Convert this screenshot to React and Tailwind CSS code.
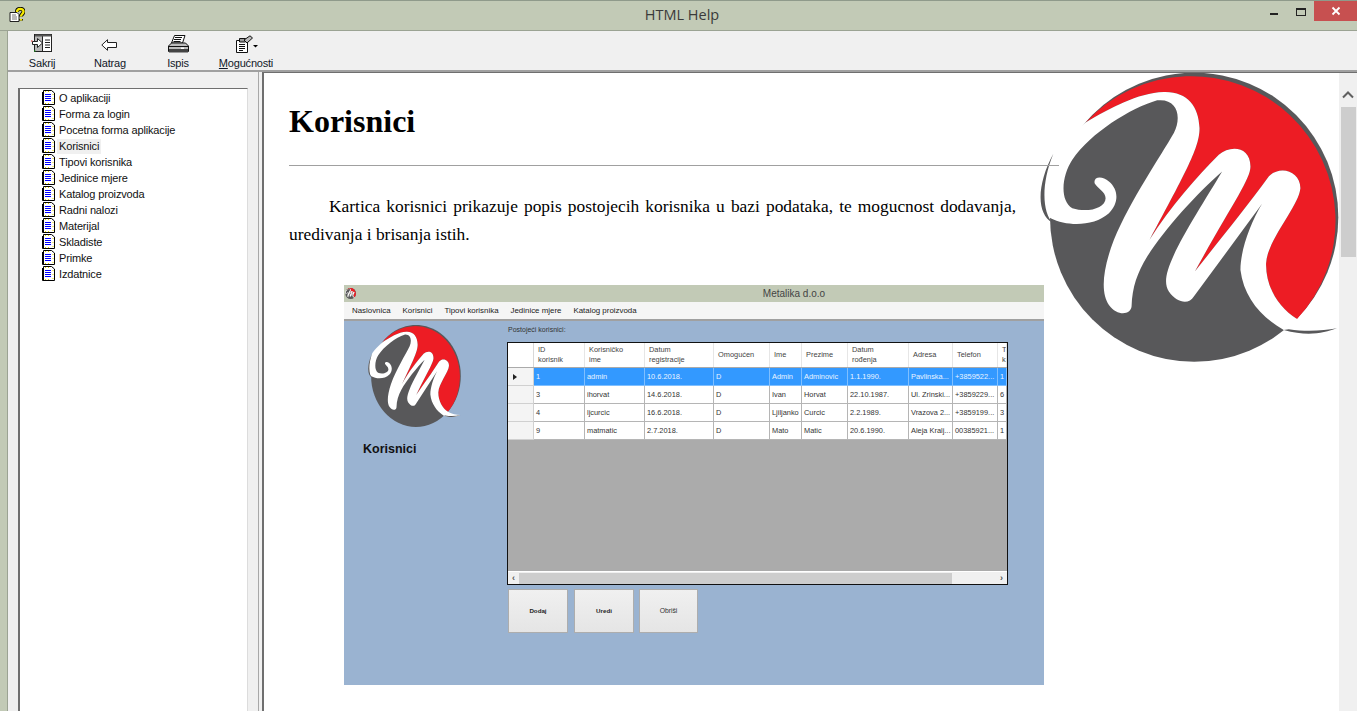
const topics = ['O aplikaciji', 'Forma za login', 'Pocetna forma aplikacije', 'Korisnici', 'Tipovi korisnika', 'Jedinice mjere', 'Katalog proizvoda', 'Radni nalozi', 'Materijal', 'Skladiste', 'Primke', 'Izdatnice'];

const menu = ['Naslovnica', 'Korisnici', 'Tipovi korisnika', 'Jedinice mjere', 'Katalog proizvoda'];

const headers = [['ID', 'korisnik'], ['Korisničko', 'ime'], ['Datum', 'registracije'], ['Omogućen'], ['Ime'], ['Prezime'], ['Datum', 'rođenja'], ['Adresa'], ['Telefon'], ['T', 'k']];

const rows = [
  ['1', 'admin', '10.6.2018.', 'D', 'Admin', 'Adminovic', '1.1.1990.', 'Pavlinska...', '+3859522...', '1'],
  ['3', 'ihorvat', '14.6.2018.', 'D', 'Ivan', 'Horvat', '22.10.1987.', 'Ul. Zrinski...', '+3859229...', '6'],
  ['4', 'ljcurcic', '16.6.2018.', 'D', 'Ljiljanko', 'Curcic', '2.2.1989.', 'Vrazova 2...', '+3859199...', '3'],
  ['9', 'matmatic', '2.7.2018.', 'D', 'Mato', 'Matic', '20.6.1990.', 'Aleja Kralj...', '00385921...', '1'],
];

const cols = 'grid grid-cols-[26px_51px_60px_69px_56px_32px_46px_61px_44px_45px_9px]';

// rub gornjeg poteza slova M, dijele ga crveni dio i bijelo slovo
const topEdge = 'M165 368 C240 325 320 280 400 277 C470 275 505 320 507 385 C508 440 470 510 357 720 C420 620 500 530 565 465 C600 435 660 440 660 500 C660 540 600 620 493 815 C560 730 650 620 715 530 C750 495 810 515 810 565 C805 620 710 720 707 790 C705 860 745 925 800 957';

function Logo({ className }) {
  return (
    <svg viewBox="28 220 898 866" preserveAspectRatio="none" className={className}>
      <circle cx="491" cy="652" r="433" fill="#58585a" />
      <path d={topEdge + ' A433 433 0 0 0 165 368 Z'} fill="#ed1c24" />
      <path
        d={topEdge + ' C840 975 880 985 920 985 C880 1000 830 1008 760 990 C690 950 640 890 630 810 C630 750 660 670 695 612 L490 890 C475 915 440 910 415 875 C400 850 405 820 430 765 C460 700 530 590 575 515 C500 580 400 690 350 770 C320 820 305 860 303 920 C300 945 260 950 235 915 C210 880 215 810 250 720 C300 600 390 470 430 400 C455 350 440 295 380 302 C300 325 180 400 125 480 C95 525 85 600 125 625 C170 640 225 625 225 595 C225 575 200 565 192 550 C188 530 215 528 235 545 C265 570 265 610 235 640 C190 680 110 680 60 655 C25 630 20 560 68 462 C80 440 130 395 165 368 Z'}
        fill="#fff"
      />
      <path d="M68 462 C20 550 15 640 65 668 C38 640 28 560 68 462 Z" fill="#58585a" />
      <path d="M760 990 C830 1010 880 1000 920 985 C880 992 830 996 775 988 Z" fill="#58585a" />
    </svg>
  );
}

function PageIcon() {
  return (
    <svg width="13" height="16" viewBox="0 0 13 16" className="shrink-0">
      <path d="M1.500 .5H9.500L12.500 3V14.500H1.500Z" fill="#fff" stroke="#000" />
      <path d="M.5 2V14.500H11" fill="none" stroke="#000" />
      <path d="M3 1.500h1M6 1.500h1M11 4v1M11 8v1M11 12v1M3 13.500h1M6 13.500h1" stroke="#e8d800" />
      <path d="M3 4.500h6M3 6.500h6M3 8.500h6M3 10.500h6" stroke="#0000ff" />
    </svg>
  );
}

function HelpIcon() {
  return (
    <svg width="16" height="16" viewBox="0 0 16 16">
      <path d="M1 5.500H8L10 7.500V14.500H1Z" fill="#fff" stroke="#222" />
      <path d="M3 8h4M3 10h5M3 12h5" stroke="#777" />
      <path d="M8 5C8 1 14.500 .8 14.500 4.500C14.500 7 12 7 12 9.500M12 12V13.500" fill="none" stroke="#000" strokeWidth="4" />
      <path d="M8 5C8 1 14.500 .8 14.500 4.500C14.500 7 12 7 12 9.500M12 12V13.500" fill="none" stroke="#f5e800" strokeWidth="2.400" />
    </svg>
  );
}

function HideIcon() {
  return (
    <svg width="22" height="20" viewBox="0 0 22 20">
      <rect x="3.500" y=".5" width="17" height="17" fill="#fff" stroke="#222" />
      <rect x="3.500" y=".5" width="8" height="17" fill="#b8b8b8" stroke="#222" />
      <path d="M4 .5H20.500V2.500H4Z" fill="#555" />
      <path d="M14 6h5M14 8.500h5M14 11h5M14 13.500h5" stroke="#222" />
      <path d="M1.500 7.500H6.500V4.500L11.500 9L6.500 13.500V10.500H1.500Z" fill="#fff" stroke="#222" />
      <path d="M0 7h1.500" stroke="#e02020" />
      <path d="M3 17h1.500" stroke="#20b020" />
    </svg>
  );
}

function BackIcon() {
  return (
    <svg width="16" height="12" viewBox="0 0 16 12" className="mb-[3px] mr-[2px]">
      <path d="M.8 6L6.500 .7V3.500H15.500V8.500H6.500V11.300Z" fill="#fff" stroke="#222" />
    </svg>
  );
}

function PrintIcon() {
  return (
    <svg width="21" height="19" viewBox="0 0 21 19">
      <path d="M6.500 .5H17L14.500 8H3.500Z" fill="#fff" stroke="#111" />
      <path d="M7 2.500h7M6 4.500h7M5.500 6.500h7" stroke="#111" />
      <path d="M3.500 8H17.500L20.500 11V16.500H.5V11Z" fill="#bdbdbd" stroke="#111" />
      <path d="M1 11.500H20" stroke="#111" />
      <rect x="1" y="14" width="19" height="3.500" fill="#444" />
      <rect x="13" y="12.500" width="3" height="1.500" fill="#fff" />
    </svg>
  );
}

function OptionsIcon() {
  return (
    <svg width="22" height="19" viewBox="0 0 22 19" className="ml-[2px]">
      <path d="M.5 5.500H11.500V17.500H.5Z" fill="#fff" stroke="#111" />
      <path d="M3.500 3.500H9.500V7H3.500Z" fill="#9a9a9a" stroke="#111" />
      <path d="M3 9.500h6M3 11.500h6M3 13.500h6M3 15.500h4" stroke="#111" />
      <path d="M8 5L14 .8L16.500 3L11 8Z" fill="#bbb" stroke="#111" />
      <path d="M17 10h5l-2.500 2.500Z" fill="#000" />
    </svg>
  );
}

function ToolButton({ icon, children }) {
  return (
    <div className="w-[68px] h-full flex flex-col items-center">
      <div className="h-[23px] flex items-end justify-center">{icon}</div>
      <span className="mt-[2px] text-[11px] tracking-[-0.2px] leading-[14px] text-[#101828]">{children}</span>
    </div>
  );
}

function MiniApp() {
  return (
    <div className="w-[700px] h-[400px] ml-[55px] mt-[37px] flex flex-col bg-[#9ab3d1] font-['Liberation_Sans',sans-serif] text-[#222]">
      <div className="h-[17px] shrink-0 bg-[#c2cab6] flex items-center">
        <Logo className="w-[11px] h-[11px] ml-[1px]" />
        <span className="flex-1 text-center text-[10px] pl-[188px] text-[#444]">Metalika d.o.o</span>
      </div>
      <div className="h-[19px] shrink-0 bg-[#f5f5f5] border-b-2 border-[#a0a0a0] flex items-center pl-[8px] gap-[12px] text-[7.9px]">
        {menu.map(m => <span key={m}>{m}</span>)}
      </div>
      <div className="flex-1 flex">
        <div className="w-[163px] shrink-0 flex flex-col pl-[24px] pt-[4px]">
          <Logo className="w-[93px] h-[102px]" />
          <span className="mt-[14px] ml-[-5px] text-[12.5px] leading-[16px] font-bold text-[#111]">Korisnici</span>
        </div>
        <div className="flex flex-col pt-[4px]">
          <span className="text-[7px] leading-[10px] ml-[1px] h-[17px] text-[#333]">Postojeći korisnici:</span>
          <div className="w-[501px] h-[243px] border border-[#111] flex flex-col bg-[#ababab] text-[7.4px] leading-[10px]">
            <div className={cols + ' h-[25px] bg-white border-b border-[#aaa]'}>
              <div className="border-r border-[#d8d8d8]" />
              {headers.map((h, i) => (
                <div key={i} className="flex flex-col justify-center pl-[4px] border-r border-[#e6e6e6] overflow-hidden whitespace-nowrap text-[#444]">
                  {h.map(l => <span key={l}>{l}</span>)}
                </div>
              ))}
            </div>
            {rows.map((r, i) => (
              <div key={r[0]} className={cols + ' h-[18px]'}>
                <div className="bg-[#f4f4f4] border-r border-b border-[#d0d0d0] flex items-center pl-[5px]">
                  {i === 0 && <span className="w-0 h-0 border-y-[3px] border-y-transparent border-l-[4px] border-l-[#222]" />}
                </div>
                {r.map((c, j) => (
                  <div key={j} className={'flex items-center pl-[2px] border-r border-b overflow-hidden whitespace-nowrap ' + (i === 0 ? 'bg-[#3399ff] text-[#eaf4ff] border-[#7fbfff]' : 'bg-white text-[#333] border-[#b5b5b5]')}>
                    {c}
                  </div>
                ))}
              </div>
            ))}
            <div className="flex-1" />
            <div className="h-[13px] shrink-0 bg-[#f0f0f0] border-t border-white flex items-center text-[9px] leading-none text-[#555]">
              <span className="w-[11px] text-center font-bold">‹</span>
              <div className="w-[433px] h-[11px] bg-[#cdcdcd]" />
              <span className="flex-1" />
              <span className="w-[11px] text-center font-bold">›</span>
            </div>
          </div>
          <div className="flex mt-[4px] ml-[1px] text-[6.2px]">
            <div className="w-[60px] h-[44px] bg-gradient-to-b from-[#f0f0f0] to-[#e5e5e5] border border-[#adadad] flex items-center justify-center font-bold text-[#222]">Dodaj</div>
            <div className="w-[60px] h-[44px] ml-[6px] bg-gradient-to-b from-[#f0f0f0] to-[#e5e5e5] border border-[#adadad] flex items-center justify-center font-bold text-[#222]">Uredi</div>
            <div className="w-[59px] h-[44px] ml-[5px] bg-gradient-to-b from-[#f0f0f0] to-[#e5e5e5] border border-[#adadad] flex items-center justify-center text-[6.8px] text-[#333]">Obriši</div>
          </div>
        </div>
      </div>
    </div>
  );
}

export default function App() {
  return (
    <div className="w-[1357px] h-[711px] overflow-hidden flex flex-col bg-[#c2cab6] font-['Liberation_Sans',sans-serif]">
      <div className="h-[31px] shrink-0 flex border-t border-[#8f9a8b] border-b border-b-[#9ba393]">
        <div className="w-[107px] pl-[9px] pt-[6px]"><HelpIcon /></div>
        <div className="flex-1 text-center font-['Open_Sans',sans-serif] text-[14.5px] leading-[28px] text-[#3a3a3a]">HTML Help</div>
        <div className="w-[100px] flex">
          <div className="w-[57px] flex justify-end items-start">
            <div className="w-[8px] h-[2px] mt-[12px] mr-[18px] bg-[#222]" />
            <div className="w-[10px] h-[8px] mt-[7px] mr-[8px] border border-t-2 border-[#222]" />
          </div>
          <div className="w-[43px] h-[20px] bg-[#c75050] flex items-center justify-center">
            <svg width="10" height="10" viewBox="0 0 10 10">
              <path d="M1.500 1.500L8.500 8.500M8.500 1.500L1.500 8.500" stroke="#fff" strokeWidth="1.800" />
            </svg>
          </div>
        </div>
      </div>

      <div className="flex-1 min-h-0 flex">
        <div className="w-[8px] shrink-0 border-r border-[#9ba393]" />
        <div className="flex-1 flex flex-col bg-[#f0f0f0]">
          <div className="h-[41px] shrink-0 flex border-b-2 border-[#a0a0a0]">
            <ToolButton icon={<HideIcon />}>Sakrij</ToolButton>
            <ToolButton icon={<BackIcon />}>Natrag</ToolButton>
            <ToolButton icon={<PrintIcon />}>Ispis</ToolButton>
            <ToolButton icon={<OptionsIcon />}><span className="underline">M</span>ogućnosti</ToolButton>
          </div>

          <div className="flex-1 min-h-0 flex">
            <div className="w-[251px] shrink-0 pl-[10px] pr-[10px] pt-[16px] border-r border-[#a8a8a8]">
              <div className="h-full border-t border-l-2 border-[#6f6f6f] border-r border-r-[#dcdcdc] bg-white pl-[22px] pt-px">
                {topics.map(t => (
                  <div key={t} className="h-[16px] flex items-center text-[11px] tracking-[-0.15px] text-[#111]">
                    <PageIcon />
                    <span className={'ml-[2px] px-[2px] leading-[15px] ' + (t === 'Korisnici' ? 'bg-[#f0f0f0]' : '')}>{t}</span>
                  </div>
                ))}
              </div>
            </div>
            <div className="w-[3px] shrink-0" />
            <div className="flex-1 flex border-l-2 border-t border-[#6f6f6f] bg-white">
              <div className="flex-1 relative overflow-hidden font-['Liberation_Serif',serif] text-black">
                <Logo className="absolute top-0 right-0 w-[299px] h-[289px]" />
                <div className="relative pl-[25px]">
                  <h1 className="pt-[30px] text-[32px] leading-[37px] font-bold">Korisnici</h1>
                  <div className="mt-[25px] w-[770px] h-px bg-[#a0a0a0]" />
                  <p className="mt-[26px] w-[727px] text-[17.4px] leading-[28px] indent-[40px] text-justify">
                    Kartica korisnici prikazuje popis postojecih korisnika u bazi podataka, te mogucnost dodavanja, uredivanja i brisanja istih.
                  </p>
                  <MiniApp />
                </div>
              </div>
              <div className="w-[18px] shrink-0 bg-[#f0f0f0] flex flex-col items-center">
                <svg width="12" height="8" viewBox="0 0 12 8" className="mt-[18px]">
                  <path d="M1 6.500L6 1.500L11 6.500" fill="none" stroke="#606060" strokeWidth="2" />
                </svg>
                <div className="mt-[8px] w-[15px] h-[150px] bg-[#cdcdcd]" />
              </div>
            </div>
          </div>
        </div>
      </div>
    </div>
  );
}
